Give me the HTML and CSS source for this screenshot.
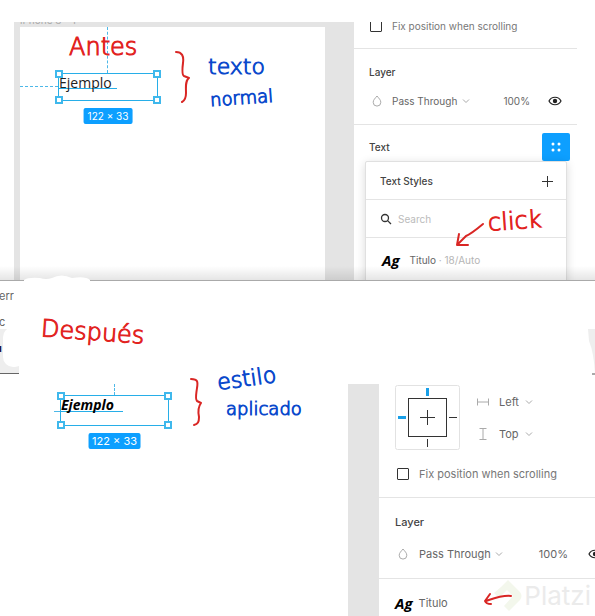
FILE: index.html
```
<!DOCTYPE html>
<html lang="es">
<head>
  <meta charset="UTF-8">
  <meta name="viewport" content="width=device-width, initial-scale=1.0">
  <title>Estilos de texto</title>
  <link rel="stylesheet" href="styles.css">
</head>
<body>
  <section class="shot before">
    <div class="canvas">
      <span class="frame-name">iPhone 8 - 1</span>
      <div class="frame">
        <span class="guide guide-v"></span>
        <span class="guide guide-h"></span>
        <p class="note red antes">Antes</p>
        <div class="selection">
          <span class="sample">Ejemplo</span>
          <i class="handle tl"></i><i class="handle tr"></i><i class="handle bl"></i><i class="handle br"></i>
          <span class="size">122 × 33</span>
        </div>
        <svg class="brace" width="16" height="54" viewBox="0 0 16 54"><path d="M2 2 C8 2 10 6 9 13 C8 21 8 25 10 26 L15 28 C11 31 12 37 12 43 C12 48 10 51 8 52"/></svg>
        <p class="note blue texto">texto</p>
        <p class="note blue small normal">normal</p>
      </div>
    </div>
    <aside class="panel">
      <div class="fix-row">
        <input type="checkbox" id="fix1">
        <label for="fix1">Fix position when scrolling</label>
      </div>
      <div class="layer">
        <h3>Layer</h3>
        <div class="blend">
          <svg class="drop" width="10" height="12" viewBox="0 0 10 12"><path d="M5 1 C3 3.5 1.2 5 1.2 7.3 A3.8 3.8 0 0 0 8.8 7.3 C8.8 5 7 3.5 5 1 Z"/></svg>
          <select aria-label="Blend mode"><option>Pass Through</option></select>
          <svg class="chevron" width="8" height="6" viewBox="0 0 8 6"><path d="M1 1.5 L4 4.5 L7 1.5"/></svg>
          <span class="opacity">100%</span>
          <button type="button" class="icon" aria-label="Visible">
            <svg class="eye" width="14" height="10" viewBox="0 0 14 10"><path d="M1 5 C3.5 0 10.5 0 13 5 C10.5 10 3.5 10 1 5 Z"/><circle cx="7" cy="5" r="2.2"/></svg>
          </button>
        </div>
      </div>
      <div class="text-row">
        <h3>Text</h3>
        <button type="button" class="style-button" aria-label="Styles">
          <svg width="12" height="12" viewBox="0 0 12 12" fill="#fff"><circle cx="3" cy="3" r="1.5"/><circle cx="9" cy="3" r="1.5"/><circle cx="3" cy="9" r="1.5"/><circle cx="9" cy="9" r="1.5"/></svg>
        </button>
      </div>
      <div class="popup">
        <div class="popup-head">
          <h3>Text Styles</h3>
          <button type="button" class="icon" aria-label="Add">
            <svg width="12" height="12" viewBox="0 0 12 12" stroke="#333"><path d="M6.5 1 V12 M1 6.5 H12"/></svg>
          </button>
        </div>
        <div class="search">
          <svg width="12" height="12" viewBox="0 0 12 12" fill="none" stroke="#333" stroke-width="1.3"><circle cx="5" cy="5" r="3.5"/><path d="M7.6 7.6 L11 11"/></svg>
          <input type="text" placeholder="Search" aria-label="Search">
        </div>
        <a class="style-item" href="#"><b>Ag</b><span>Titulo <em>· 18/Auto</em></span></a>
        <p class="note red click">click</p>
        <svg class="arrow" width="30" height="26" viewBox="0 0 30 26"><path d="M28 2 C22 7 16 12 11 14 L3 22 M4 12 L2 23 L13 23"/></svg>
      </div>
    </aside>
  </section>

  <section class="divider">
    <div class="scrap">
      <span>err</span>
      <span>c</span>
      <strong>u</strong>
    </div>
    <p class="note red despues">Después</p>
    <svg class="smear" width="66" height="8" viewBox="0 0 66 8"><path d="M0 5 Q4 2 16 3 Q22 5 28 3 Q37 -2 48 3 Q62 1 66 5 V8 H0 Z"/></svg>
    <svg class="scrap-right" width="7" height="46" viewBox="0 0 7 46"><path d="M0 0 H7 V45 Q6 24 1 12 Z" fill="#eee"/><path d="M4 45 H7" stroke="#555"/></svg>
  </section>

  <section class="shot after">
    <div class="canvas">
      <div class="frame">
        <span class="guide guide-v"></span>
        <span class="guide guide-h"></span>
        <div class="selection">
          <span class="sample styled">Ejemplo</span>
          <i class="handle tl"></i><i class="handle tr"></i><i class="handle bl"></i><i class="handle br"></i>
          <span class="size">122 × 33</span>
        </div>
        <svg class="brace" width="14" height="50" viewBox="0 0 14 50"><path d="M2 2 C9 2 9 5 8 11 C7 19 6 22 8 24 L12 26 C9 30 9 35 10 40 C10 45 9 47 5 48"/></svg>
        <p class="note blue estilo">estilo</p>
        <p class="note blue small aplicado">aplicado</p>
      </div>
    </div>
    <aside class="panel">
      <div class="constraints">
        <svg width="65" height="65" viewBox="0 0 65 65" fill="none">
          <rect x="0.5" y="0.5" width="64" height="64" rx="2" stroke="#e2e2e2"/>
          <rect x="13.5" y="13.5" width="38" height="38" stroke="#333"/>
          <path d="M32.5 25 V40 M25 32.5 H40 M54 32.5 H62 M32.5 54 V62" stroke="#333"/>
          <path d="M32.5 3 V11 M3 32.5 H11" stroke="#189fe8" stroke-width="3"/>
        </svg>
        <div class="axes">
          <label>
            <svg class="axis" width="12" height="12" viewBox="0 0 12 12"><path d="M0.5 2.5 V9.5 M11.5 2.5 V9.5 M0.5 6 H11.5"/></svg>
            <select aria-label="Horizontal"><option>Left</option></select>
            <svg class="chevron" width="8" height="6" viewBox="0 0 8 6"><path d="M1 1.5 L4 4.5 L7 1.5"/></svg>
          </label>
          <label>
            <svg class="axis" width="12" height="12" viewBox="0 0 12 12"><path d="M2.5 0.5 H9.5 M2.5 11.5 H9.5 M6 0.5 V11.5"/></svg>
            <select aria-label="Vertical"><option>Top</option></select>
            <svg class="chevron" width="8" height="6" viewBox="0 0 8 6"><path d="M1 1.5 L4 4.5 L7 1.5"/></svg>
          </label>
        </div>
      </div>
      <div class="fix-row">
        <input type="checkbox" id="fix2">
        <label for="fix2">Fix position when scrolling</label>
      </div>
      <div class="layer">
        <h3>Layer</h3>
        <div class="blend">
          <svg class="drop" width="10" height="12" viewBox="0 0 10 12"><path d="M5 1 C3 3.5 1.2 5 1.2 7.3 A3.8 3.8 0 0 0 8.8 7.3 C8.8 5 7 3.5 5 1 Z"/></svg>
          <select aria-label="Blend mode"><option>Pass Through</option></select>
          <svg class="chevron" width="8" height="6" viewBox="0 0 8 6"><path d="M1 1.5 L4 4.5 L7 1.5"/></svg>
          <span class="opacity">100%</span>
          <button type="button" class="icon" aria-label="Visible">
            <svg class="eye" width="14" height="10" viewBox="0 0 14 10"><path d="M1 5 C3.5 0 10.5 0 13 5 C10.5 10 3.5 10 1 5 Z"/><circle cx="7" cy="5" r="2.2"/></svg>
          </button>
        </div>
      </div>
      <a class="style-item" href="#"><b>Ag</b><span>Titulo</span></a>
      <div class="watermark">
        <svg width="30" height="34" viewBox="0 0 30 34"><path d="M9 8 L16 1 L28 13 Q31 17 28 21 L17 32 L12 27 L21 17 L15 11 L7 19 L2 14 Z" fill="#f3f7ec"/></svg>
        <span>Platzi</span>
      </div>
      <svg class="arrow" width="30" height="14" viewBox="0 0 30 14"><path d="M28 4 C20 3 12 6 3 9 M7 2 L2 9 Q3 12 8 12"/></svg>
    </aside>
  </section>
</body>
</html>
```
FILE: styles.css
```
* {
  box-sizing: border-box;
}

body {
  display: flex;
  flex-direction: column;
  min-height: 100vh;
  margin: 0;
  overflow: hidden;
  background: #fff;
  color: #666;
  font: 11px/16px Inter, "Liberation Sans", sans-serif;
}

h3, p {
  margin: 0;
}

h3 {
  color: #444;
  font-size: inherit;
  line-height: inherit;
  font-weight: 500;
}

svg {
  flex: none;
  display: block;
}

a {
  color: inherit;
  text-decoration: none;
}

button {
  padding: 0;
  border: 0;
  background: none;
}

select {
  appearance: none;
  padding: 0;
  border: 0;
  background: none;
  color: inherit;
  font: inherit;
}

input[type="checkbox"] {
  appearance: none;
  flex: none;
  width: 12px;
  height: 12px;
  margin: 0;
  border: 1px solid #333;
  border-radius: 1px;
}

.shot {
  display: flex;
  position: relative;
}

.canvas {
  flex: 1;
  position: relative;
  background: #e4e4e4;
}

.frame {
  position: relative;
  height: 100%;
  background: #fff;
}

.panel {
  position: relative;
  background: #fff;
}

/* top screenshot */

.before {
  height: 259px;
  margin-top: 22px;
  padding: 0 18px 0 14px;
  overflow: hidden;
  border-bottom: 1px solid #aaa;
  font-size: 10px;
}

.before::after {
  content: "";
  position: absolute;
  left: 0;
  right: 0;
  bottom: 0;
  height: 14px;
  background: linear-gradient(transparent, rgba(0, 0, 0, 0.1));
}

.before .canvas {
  padding: 5px 29px 0 6px;
}

.before .panel {
  width: 223px;
}

.frame-name {
  position: absolute;
  left: 6px;
  top: -10px;
  height: 13px;
  overflow: hidden;
  color: #aaa;
}

/* selected layer */

.selection {
  position: absolute;
  left: 38px;
  top: 46px;
  width: 100px;
  height: 28px;
  border: 1px solid #27aee8;
}

.sample {
  display: block;
  width: 58px;
  height: 15px;
  border-bottom: 1px solid #27aee8;
  color: #222;
  font: 14px/18px "Open Sans", "Noto Sans", sans-serif;
}

.sample.styled {
  width: 62px;
  height: 16px;
  color: #000;
  font-weight: 700;
  font-style: italic;
}

.handle {
  position: absolute;
  width: 8px;
  height: 8px;
  border: 2px solid #3fb8ec;
  background: #fff;
}

.tl, .bl {
  left: -4px;
}

.tr, .br {
  right: -4px;
}

.tl, .tr {
  top: -4px;
}

.bl, .br {
  bottom: -4px;
}

.size {
  position: absolute;
  left: 50%;
  top: 34px;
  padding: 0 4px;
  transform: translateX(-50%);
  border-radius: 2px;
  background: #0d9fff;
  color: #fff;
  font-size: 10px;
  white-space: nowrap;
}

.guide {
  position: absolute;
}

.guide-v {
  left: 87px;
  top: 0;
  height: 46px;
  border-left: 1px dashed #4db8e8;
}

.guide-h {
  left: 0;
  top: 59px;
  width: 38px;
  border-top: 1px dashed #4db8e8;
}

/* pen notes */

.note {
  position: absolute;
  font: 24px/28px "DejaVu Sans", sans-serif;
  font-weight: 200;
  -webkit-text-stroke: 1px currentColor;
  white-space: nowrap;
}

.red {
  color: #e2231f;
}

.blue {
  color: #0b49cc;
  font-size: 22px;
}

.small {
  font-size: 18px;
}

.brace, .arrow {
  position: absolute;
  fill: none;
  stroke: #d92624;
  stroke-width: 2;
  stroke-linecap: round;
  stroke-linejoin: round;
}

.brace {
  left: 154px;
  top: 23px;
}

.antes {
  left: 49px;
  top: 6px;
}

.texto {
  left: 188px;
  top: 26px;
}

.normal {
  left: 190px;
  top: 57px;
  transform: rotate(-4deg);
}

/* properties panel */

.fix-row {
  display: flex;
  align-items: center;
  gap: 10px;
  color: #777;
}

.before .fix-row {
  height: 27px;
  padding: 0 16px 18px;
  border-bottom: 1px solid #e4e4e4;
}

.layer {
  border-bottom: 1px solid #e4e4e4;
}

.before .layer {
  height: 76px;
  padding: 15px 15px 0;
}

.blend {
  display: flex;
  align-items: center;
}

.before .blend {
  margin-top: 13px;
  padding: 0 0 0 3px;
}

.blend select {
  margin: 0 4px 0 10px;
}

.opacity {
  margin-left: auto;
}

.before .opacity {
  margin-right: 18px;
}

.drop, .chevron, .axis {
  fill: none;
  stroke: #aaa;
}

.eye {
  fill: none;
  stroke: #222;
  stroke-width: 1.2;
}

.eye circle {
  fill: #222;
  stroke: none;
}

.text-row {
  display: flex;
  justify-content: space-between;
  align-items: center;
  padding: 8px 7px 0 15px;
}

.style-button {
  display: grid;
  place-items: center;
  width: 28px;
  height: 28px;
  border-radius: 2px;
  background: #0d9fff;
}

.popup {
  position: relative;
  height: 140px;
  margin: 0 10px 0 11px;
  border: 1px solid #e0e0e0;
  border-radius: 2px;
  background: #fff;
  box-shadow: 0 2px 10px rgba(0, 0, 0, 0.15);
}

.popup-head, .search {
  display: flex;
  align-items: center;
  height: 38px;
  padding: 0 13px 0 14px;
  border-bottom: 1px solid #e4e4e4;
}

.popup-head {
  justify-content: space-between;
}

.search {
  gap: 6px;
}

.search input {
  flex: 1;
  min-width: 0;
  padding: 0;
  border: 0;
  background: none;
  font: inherit;
}

.search input::placeholder {
  color: #bbb;
}

.style-item {
  display: flex;
  align-items: center;
}

.style-item b {
  color: #000;
  font: italic 700 15px/20px "Open Sans", "Noto Sans", sans-serif;
}

.popup .style-item {
  height: 43px;
  padding-left: 16px;
  gap: 10px;
}

.style-item em {
  color: #b5b5b5;
  font-style: normal;
}

.click {
  left: 122px;
  top: 45px;
  transform: rotate(-4deg);
}

.popup .arrow {
  left: 89px;
  top: 60px;
}

/* space between both screenshots */

.divider {
  position: relative;
  height: 103px;
}

.scrap {
  width: 19px;
  height: 93px;
  overflow: hidden;
  border-bottom: 1px solid #666;
  background: linear-gradient(#fff 48px, #eee 48px);
}

.scrap span, .scrap strong {
  display: block;
  width: 14px;
  height: 26px;
  overflow: hidden;
  padding-top: 7px;
  text-indent: -1px;
}

.scrap strong {
  width: 3px;
  color: #214;
  text-indent: -5px;
}

.scrap::after {
  content: "";
  position: absolute;
  left: 3px;
  top: 46px;
  width: 22px;
  height: 40px;
  border-radius: 10px;
  background: #fff;
}

.despues {
  left: 41px;
  top: 37px;
  transform: rotate(4deg);
}

.smear {
  position: absolute;
  left: 24px;
  top: -6px;
  fill: #fff;
}

.scrap-right {
  position: absolute;
  right: 0;
  top: 48px;
}

/* bottom screenshot */

.after {
  flex: 1;
  min-height: 232px;
}

.after .canvas {
  padding-right: 31px;
}

.after .panel {
  width: 216px;
}

.after .selection {
  left: 60px;
  top: 11px;
  width: 109px;
  height: 31px;
}

.after .size {
  top: 37px;
  font-size: 11px;
}

.after .guide-v {
  left: 114px;
  height: 11px;
}

.after .guide-h {
  left: 54px;
  top: 27px;
  width: 6px;
}

.after .brace {
  left: 189px;
  top: -7px;
}

.estilo {
  left: 217px;
  top: -19px;
  transform: rotate(-8deg);
}

.aplicado {
  left: 226px;
  top: 11px;
}

.constraints {
  display: flex;
  gap: 17px;
  padding: 1px 16px 0;
}

.axes {
  display: grid;
  gap: 16px;
  align-content: center;
}

.axes label {
  display: flex;
  align-items: center;
}

.axes select {
  margin: 0 6px 0 10px;
}

.after .fix-row {
  height: 48px;
  padding: 0 18px;
  border-bottom: 1px solid #e4e4e4;
}

.after .layer {
  height: 81px;
  padding: 16px 0 0 16px;
}

.after .blend {
  margin-top: 16px;
  padding-left: 3px;
  overflow: hidden;
}

.after .blend select {
  margin-left: 11px;
}

.after .opacity {
  margin-right: 20px;
}

.after .icon {
  width: 7px;
  overflow: hidden;
}

.after .icon svg {
  width: 14px;
}

.after .style-item {
  height: 37px;
  padding: 10px 16px 0;
  gap: 6px;
}

.watermark {
  display: flex;
  align-items: center;
  position: absolute;
  right: 4px;
  bottom: 3px;
  gap: 2px;
  color: #ebebeb;
  font-size: 26px;
  line-height: 34px;
  font-weight: 400;
}

.after .arrow {
  right: 82px;
  bottom: 10px;
}
```
